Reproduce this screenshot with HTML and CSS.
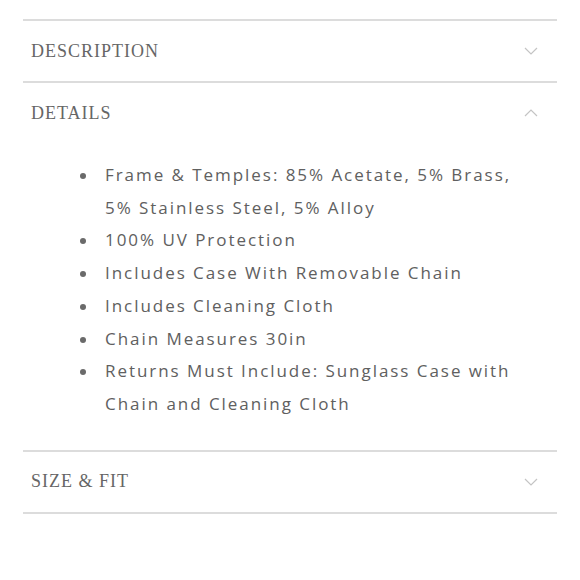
FILE: index.html
```html
<!DOCTYPE html>
<html lang="en">
<head>
    <meta charset="UTF-8">
    <meta name="viewport" content="width=device-width, initial-scale=1.0">
    <title>Product details</title>
    <link rel="stylesheet" href="styles.css">
</head>
<body>

    <div class="accordion">
        <div class="panel">
            <div class="panel-head">
                <span class="panel-title">DESCRIPTION</span>
                <svg class="chevron" viewBox="0 0 14 8"><polyline points="1,1 7,7 13,1"/></svg>
            </div>
        </div>

        <div class="panel open">
            <div class="panel-head">
                <span class="panel-title">DETAILS</span>
                <svg class="chevron" viewBox="0 0 14 8"><polyline points="1,7 7,1 13,7"/></svg>
            </div>
            <ul class="details-list">
                <li>Frame &amp; Temples: 85% Acetate, 5% Brass, 5% Stainless Steel, 5% Alloy</li>
                <li>100% UV Protection</li>
                <li>Includes Case With Removable Chain</li>
                <li>Includes Cleaning Cloth</li>
                <li>Chain Measures 30in</li>
                <li>Returns Must Include: Sunglass Case with Chain and Cleaning Cloth</li>
            </ul>
        </div>

        <div class="panel">
            <div class="panel-head">
                <span class="panel-title">SIZE &amp; FIT</span>
                <svg class="chevron" viewBox="0 0 14 8"><polyline points="1,1 7,7 13,1"/></svg>
            </div>
        </div>
    </div>

</body>
</html>
```

FILE: styles.css
```css
body {
    margin: 0;
    padding: 0;
    background-color: #fff;
    font-family: 'Liberation Serif', serif;
}

.accordion {
    margin: 19px 23px 0 23px;
    border-top: 2px solid #dcdcdc;
}

.panel {
    border-bottom: 2px solid #dcdcdc;
}

.panel-head {
    height: 60px;
    display: flex;
    align-items: center;
    justify-content: space-between;
    padding: 0 19px 0 8px;
}

.panel-title {
    font-size: 18px;
    letter-spacing: 1px;
    color: #666;
}

.chevron {
    width: 14px;
    height: 8px;
    fill: none;
    stroke: #c4c4c4;
    stroke-width: 1.2;
}

.details-list {
    list-style: none;
    margin: 16px 0 0 0;
    padding: 0 26px 29px 57px;
    font-family: 'Open Sans', sans-serif;
    font-size: 17px;
    letter-spacing: 1.95px;
    line-height: 32.7px;
    color: #606060;
}

.details-list li {
    display: flex;
}

.details-list li::before {
    content: "";
    flex: none;
    width: 6px;
    height: 6px;
    border-radius: 50%;
    background-color: #6a6a6a;
    margin: 14px 19px 0 0;
}
```
